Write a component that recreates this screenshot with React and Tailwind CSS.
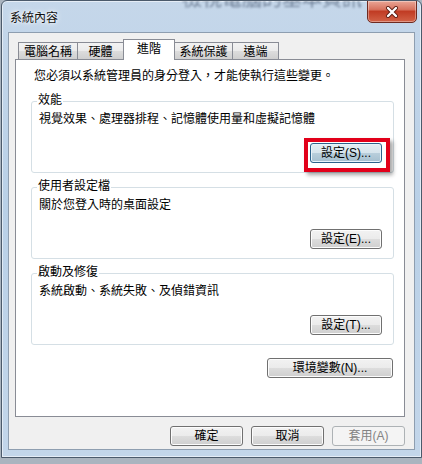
import React from "react";

const FONT = "font-['Liberation_Sans','Noto_Sans_CJK_TC',sans-serif]";

const btn =
  "h-[20px] rounded-[3px] border border-[#707070] bg-[linear-gradient(#f2f2f2,#ebebeb_50%,#dddddd_50%,#cfcfcf)] shadow-[inset_0_0_0_1px_#fcfcfc] text-[12px] leading-[18px] text-black flex items-center justify-center";

function Tab({ label, width, active }) {
  if (active) {
    return (
      <div
        className="-ml-px relative z-20 h-[21px] border-t border-l border-r border-[#898c95] bg-white flex justify-center pt-[1px] leading-[16px]"
        style={{ width }}
      >
        {label}
      </div>
    );
  }
  return (
    <div
      className="-ml-px first:ml-0 mb-px h-[17px] border-t border-l border-r border-[#898c95] bg-[linear-gradient(#f2f2f2,#ebebeb_50%,#dddddd_50%,#cfcfcf)] flex items-center justify-center leading-[16px] pt-[1px]"
      style={{ width }}
    >
      {label}
    </div>
  );
}

function Group({ label, desc, button, highlight }) {
  return (
    <div className="h-[72px] rounded-[3px] border border-[#d5dfe5]">
      <div className="-mt-[9px] ml-[5px] w-fit bg-white px-[1px] leading-[14px]">{label}</div>
      <div className="ml-[7px] mt-[4px] leading-[16px]">{desc}</div>
      <div className="mt-[16px] flex justify-end pr-[11px]">
        {highlight ? (
          <div className="relative">
            <div className="h-[20px] w-[72px] rounded-[3px] border border-[#2c628b] bg-[linear-gradient(#e3edf3,#d6e4ec_50%,#b9cfdc_50%,#a5bfcf)] shadow-[inset_0_0_0_1px_#e8f3f9] text-[12px] leading-[18px] flex items-center justify-center">
              {button}
            </div>
            <span className="absolute left-[-6px] right-[-8px] top-[-5px] bottom-[-9px] border-4 border-[#e2001a] shadow-[3px_3px_4px_rgba(0,0,0,0.35)]" />
          </div>
        ) : (
          <div className={btn + " w-[72px]"}>{button}</div>
        )}
      </div>
    </div>
  );
}

export default function App() {
  return (
    <div className={`w-[422px] h-[464px] overflow-hidden bg-[#aab4bf] text-[12px] text-black ${FONT}`}>
      <div className="relative ml-[1px] w-[421px] h-[458px] rounded-t-[6px] border border-[#4b5a6b] bg-[linear-gradient(180deg,#c5d7ea_0%,#b9d0e7_45%,#c3d6ea_100%)] shadow-[inset_0_0_0_1px_rgba(255,255,255,0.55)] overflow-hidden">
        {/* blurred background behind the glass */}
        <div className="absolute left-[180px] top-[-14px] text-[20px] leading-[24px] text-[#1f2f4a] opacity-50 blur-[1px] whitespace-nowrap">
          檢視電腦的基本資訊
        </div>

        {/* title bar */}
        <div className="relative h-[31px] flex items-start justify-between pl-[8px] pr-[4px]">
          <div className="mt-[9px] leading-[16px] text-[#111] [text-shadow:0_0_6px_#fff,0_0_3px_#fff]">系統內容</div>
          <div className="-mt-px h-[23px] w-[50px] rounded-b-[5px] border border-[#6e2a20] bg-[linear-gradient(#eaa696,#d8735f_40%,#c13c24_50%,#d26247_100%)] shadow-[inset_0_0_0_1px_rgba(255,255,255,0.35)] flex items-center justify-center">
            <svg width="14" height="12" viewBox="0 0 14 12">
              <path d="M3 2 L11 10 M11 2 L3 10" stroke="#5a1a10" strokeWidth="4" strokeLinecap="round" />
              <path d="M3 2 L11 10 M11 2 L3 10" stroke="#ffffff" strokeWidth="2.4" strokeLinecap="round" />
            </svg>
          </div>
        </div>

        {/* client area */}
        <div className="ml-[6px] w-[407px] h-[418px] border border-[#8e9eb0] bg-[#f0f0f0] pt-[6px] pl-[6px] pr-[9px]">
          {/* tabs */}
          <div className="relative z-10 ml-[3px] flex items-end h-[21px] -mb-px">
            <Tab label="電腦名稱" width={60} />
            <Tab label="硬體" width={47} />
            <Tab label="進階" width={52} active />
            <Tab label="系統保護" width={59} />
            <Tab label="遠端" width={47} />
          </div>

          {/* tab page */}
          <div className="h-[358px] border border-[#898c95] bg-white pl-[15px] pr-[10px] pt-[8px]">
            <div className="pl-[3px] leading-[16px]">您必須以系統管理員的身分登入，才能使執行這些變更。</div>

            <div className="mt-[17px] flex flex-col gap-[14px]">
              <Group
                label="效能"
                desc="視覺效果、處理器排程、記憶體使用量和虛擬記憶體"
                button="設定(S)..."
                highlight
              />
              <Group label="使用者設定檔" desc="關於您登入時的桌面設定" button="設定(E)..." />
              <Group label="啟動及修復" desc="系統啟動、系統失敗、及偵錯資訊" button="設定(T)..." />
            </div>

            <div className="mt-[13px] flex justify-end pr-[1px]">
              <div className={btn + " w-[126px]"}>環境變數(N)...</div>
            </div>
          </div>

          {/* dialog buttons */}
          <div className="mt-[9px] flex justify-end gap-[8px]">
            <div className={btn + " w-[73px]"}>確定</div>
            <div className={btn + " w-[73px]"}>取消</div>
            <div className="h-[20px] w-[73px] rounded-[3px] border border-[#adb2b5] bg-[#f4f4f4] text-[#838383] flex items-center justify-center leading-[18px]">
              套用(A)
            </div>
          </div>
        </div>
      </div>
    </div>
  );
}
